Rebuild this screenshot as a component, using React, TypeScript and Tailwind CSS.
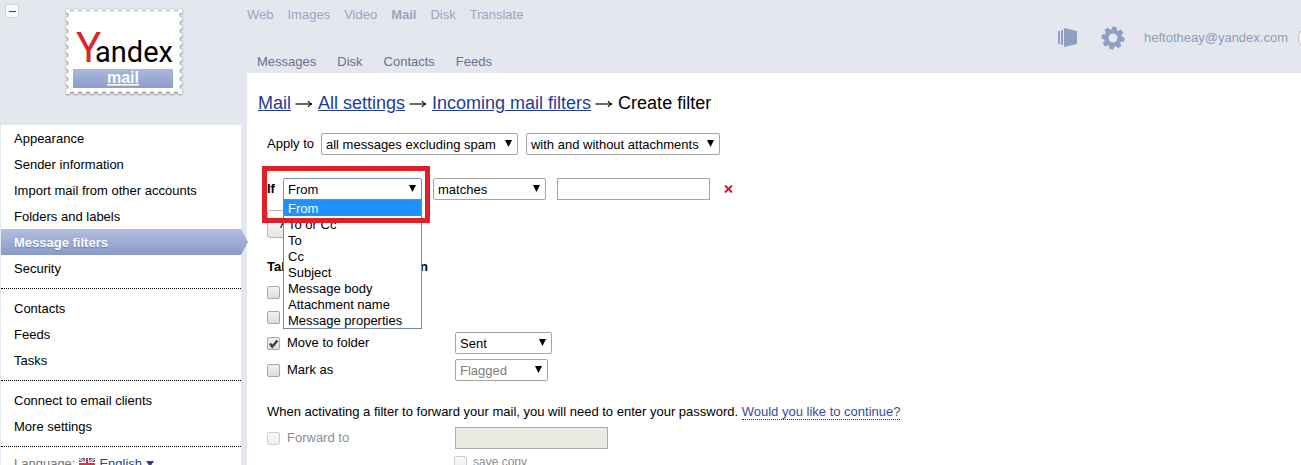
import { useState } from "react";
import type { ReactNode, SelectHTMLAttributes } from "react";
import clsx from "clsx";

const serviceLinks = ["Web", "Images", "Video", "Mail", "Disk", "Translate"];
const mailTabs = ["Messages", "Disk", "Contacts", "Feeds"];

const menuGroups = [
  [
    "Appearance",
    "Sender information",
    "Import mail from other accounts",
    "Folders and labels",
    "Message filters",
    "Security",
  ],
  ["Contacts", "Feeds", "Tasks"],
  ["Connect to email clients", "More settings"],
];

const conditionFields = [
  "From",
  "To or Cc",
  "To",
  "Cc",
  "Subject",
  "Message body",
  "Attachment name",
  "Message properties",
];

// Perforation holes along the stamp edges
const holesX = Array.from({ length: 14 }, (_, i) => 7 + i * 8);
const holesY = Array.from({ length: 10 }, (_, i) => 7 + i * 8);

function StampLogo() {
  return (
    <svg width="120" height="90" viewBox="0 0 120 90" role="img" aria-label="Yandex mail">
      <defs>
        <mask id="perforation" maskUnits="userSpaceOnUse" x="0" y="0" width="120" height="90">
          <rect x="1" y="1" width="116" height="85" fill="#fff" />
          {holesX.map((x) => (
            <g key={x}>
              <circle cx={x} cy="1" r="2.6" fill="#000" />
              <circle cx={x} cy="86" r="2.6" fill="#000" />
            </g>
          ))}
          {holesY.map((y) => (
            <g key={y}>
              <circle cx="1" cy={y} r="2.6" fill="#000" />
              <circle cx="117" cy={y} r="2.6" fill="#000" />
            </g>
          ))}
        </mask>
        <linearGradient id="band" x1="0" y1="0" x2="0" y2="1">
          <stop offset="0" stopColor="#abb8da" />
          <stop offset="1" stopColor="#8b9dcd" />
        </linearGradient>
        <filter id="stampShadow" filterUnits="userSpaceOnUse" x="0" y="0" width="120" height="90">
          <feDropShadow dx="0" dy="0.6" stdDeviation="0.8" floodColor="#55555a" floodOpacity="0.9" />
        </filter>
      </defs>
      <g filter="url(#stampShadow)">
        <rect x="1" y="1" width="116" height="85" fill="#fff" mask="url(#perforation)" />
      </g>
      <text x="11" y="54" fontFamily="Roboto, sans-serif">
        <tspan fontSize="42" fill="#d9252c">
          Y
        </tspan>
        <tspan x="30" fontSize="29" fill="#000">
          andex
        </tspan>
      </text>
      <rect x="8" y="61" width="100" height="19" fill="url(#band)" />
      <text
        x="58"
        y="75"
        textAnchor="middle"
        fontFamily="Liberation Sans, Arial, sans-serif"
        fontSize="16"
        fontWeight="bold"
        textDecoration="underline"
        fill="#fff"
      >
        mail
      </text>
    </svg>
  );
}

function FlagIcon() {
  return (
    <svg width="16" height="12" viewBox="0 0 16 12" aria-hidden="true">
      <rect width="16" height="12" fill="#4a5fa8" />
      <path d="M0 0L16 12M16 0L0 12" stroke="#fff" strokeWidth="2.4" />
      <path d="M0 0L16 12M16 0L0 12" stroke="#d9434a" strokeWidth="1" />
      <path d="M8 0V12M0 6H16" stroke="#fff" strokeWidth="4" />
      <path d="M8 0V12M0 6H16" stroke="#d9343c" strokeWidth="2" />
    </svg>
  );
}

function ThemesIcon() {
  return (
    <svg width="20" height="20" viewBox="0 0 20 20" fill="#8f9fc1" aria-hidden="true">
      <rect x="0" y="3" width="2" height="13" />
      <rect x="3" y="2" width="2" height="15" />
      <path d="M6 0L19 3V16L6 19Z" />
    </svg>
  );
}

function GearIcon() {
  const teeth = [0, 45, 90, 135, 180, 225, 270, 315];
  return (
    <svg width="24" height="24" viewBox="0 0 24 24" aria-hidden="true">
      <g fill="#8f9fc1">
        {teeth.map((angle) => (
          <path key={angle} d="M9 5L10 0.6H14L15 5Z" transform={`rotate(${angle + 8} 12 12)`} />
        ))}
      </g>
      <circle cx="12" cy="12" r="6.6" fill="none" stroke="#8f9fc1" strokeWidth="4.2" />
    </svg>
  );
}

interface SelectBoxProps extends SelectHTMLAttributes<HTMLSelectElement> {
  options: string[];
  width: string;
}

function SelectBox({ options, width, className, ...props }: SelectBoxProps) {
  return (
    <span className={clsx("relative inline-flex", width)}>
      <select
        {...props}
        className={clsx(
          "h-[22px] w-full appearance-none rounded-[2px] border bg-white pt-px pl-1 text-[13px] outline-none",
          className ?? "border-[#a5a5a5] text-black"
        )}
      >
        {options.map((option) => (
          <option key={option}>{option}</option>
        ))}
      </select>
      <svg
        className="pointer-events-none absolute top-[7px] right-[6px]"
        width="7"
        height="7"
        viewBox="0 0 7 7"
        aria-hidden="true"
      >
        <path d="M0 0H7L3.5 7Z" fill="#000" />
      </svg>
    </span>
  );
}

interface CheckBoxProps {
  label: string;
  defaultChecked?: boolean;
  disabled?: boolean;
  small?: boolean;
}

function CheckBox({ label, defaultChecked, disabled, small }: CheckBoxProps) {
  return (
    <label
      className={clsx(
        "flex items-center",
        small ? "gap-[6px] text-[12px]" : "gap-[7px] text-[13px]",
        disabled && "text-[#8c8c8c]"
      )}
    >
      <span className="relative flex">
        <input
          type="checkbox"
          defaultChecked={defaultChecked}
          disabled={disabled}
          className="peer size-[13px] appearance-none rounded-[2px] border border-[#a8a8a8] bg-linear-to-b from-[#f1f1f1] to-[#dedede] disabled:border-[#cfcfcf] disabled:from-[#f6f6f6] disabled:to-[#efefef]"
        />
        <svg
          className="pointer-events-none absolute top-0 left-0 hidden peer-checked:block"
          width="13"
          height="13"
          viewBox="0 0 13 13"
          aria-hidden="true"
        >
          <path d="M3 6.5L5.3 9.5L10.5 3.5" fill="none" stroke="#3c3c3c" strokeWidth="2.4" />
        </svg>
      </span>
      {label}
    </label>
  );
}

function Row({ label, children }: { label: ReactNode; children?: ReactNode }) {
  return (
    <div className="flex items-center">
      <div className="w-[188px] shrink-0">{label}</div>
      {children}
    </div>
  );
}

function Sidebar() {
  return (
    <aside className="flex w-[247px] shrink-0 flex-col">
      <div className="flex h-[125px] shrink-0 items-start pt-[5px] pl-[6px]">
        <button
          type="button"
          aria-label="Collapse"
          className="flex size-3 items-center justify-center bg-[#f8f9fb] ring-1 ring-[#cfd3da]"
        >
          <span className="h-px w-[7px] bg-[#444]" />
        </button>
        <a href="#mail" className="mt-[3px] ml-[47px]">
          <StampLogo />
        </a>
      </div>
      <nav className="mr-[6px] ml-px grow bg-white">
        {menuGroups.map((group) => (
          <ul key={group[0]} className="border-b border-dotted border-black pb-[7px] not-first:pt-[6px]">
            {group.map((item) => {
              const active = item === "Message filters";
              return (
                <li key={item} className={clsx("relative flex", active && "bg-linear-to-b from-[#b1bedf] to-[#8a9bca]")}>
                  <a
                    href="#settings"
                    className={clsx(
                      "grow pt-0.5 pl-[13px] leading-6",
                      active && "font-bold text-white text-shadow-[0_1px_1px_#6a7baa]"
                    )}
                  >
                    {item}
                  </a>
                  {active && (
                    <svg
                      className="absolute top-0 left-full"
                      width="7"
                      height="26"
                      viewBox="0 0 7 26"
                      aria-hidden="true"
                    >
                      <defs>
                        <linearGradient id="tip" x1="0" y1="0" x2="0" y2="1">
                          <stop offset="0" stopColor="#b1bedf" />
                          <stop offset="1" stopColor="#8a9bca" />
                        </linearGradient>
                      </defs>
                      <path d="M0 0L7 13L0 26Z" fill="url(#tip)" />
                    </svg>
                  )}
                </li>
              );
            })}
          </ul>
        ))}
        <div className="flex items-center gap-1 pt-1 pl-[13px] leading-[26px] text-[#777]">
          Language:
          <FlagIcon />
          <a href="#language" className="flex items-center gap-1 text-[#2a3f9d]">
            English
            <svg width="8" height="6" viewBox="0 0 8 6" aria-hidden="true">
              <path d="M0 0H8L4 6Z" fill="currentColor" />
            </svg>
          </a>
        </div>
      </nav>
    </aside>
  );
}

function Header() {
  return (
    <header className="flex h-[73px] shrink-0 justify-between">
      <div className="flex flex-col justify-between pt-1">
        <nav className="flex gap-[14px] leading-[22px] text-[#9aa6bf]">
          {serviceLinks.map((link) => (
            <a key={link} href="#service" className={clsx(link === "Mail" && "font-bold")}>
              {link}
            </a>
          ))}
        </nav>
        <nav className="flex gap-[21px] pl-[10px] leading-[22px] text-[#66728f]">
          {mailTabs.map((tab) => (
            <a key={tab} href="#tab">
              {tab}
            </a>
          ))}
        </nav>
      </div>
      <div className="flex items-center pt-[2px]">
        <button type="button" aria-label="Themes" className="mr-[23px]">
          <ThemesIcon />
        </button>
        <button type="button" aria-label="Settings" className="mr-[19px]">
          <GearIcon />
        </button>
        <a href="#account" className="mr-[10px] text-[#8f9cb9]">
          heftotheay@yandex.com
        </a>
        <span className="flex w-[3px] overflow-hidden">
          <span className="size-6 shrink-0 rounded-full border border-[#b9bdc6] bg-white" />
        </span>
      </div>
    </header>
  );
}

function FieldPicker() {
  const [field, setField] = useState("From");

  return (
    <div className="relative flex">
      <SelectBox
        aria-label="Condition field"
        options={conditionFields}
        width="w-[139px]"
        className="border-[#6f94c4] text-black"
        value={field}
        onChange={(event) => setField(event.target.value)}
      />
      <ul
        role="listbox"
        aria-label="Condition field"
        className="absolute top-[21px] left-0 z-10 w-full border border-[#7189a5] bg-white"
      >
        {conditionFields.map((name) => (
          <li
            key={name}
            role="option"
            aria-selected={name === field}
            onClick={() => setField(name)}
            className={clsx("pt-0.5 pl-1 leading-[14px]", name === field && "bg-[#1e90ff] text-white")}
          >
            {name}
          </li>
        ))}
      </ul>
      {/* highlight frame around the field and its first option */}
      <div className="pointer-events-none absolute -top-[12px] -left-[21px] z-20 h-[57px] w-[168px] border-5 border-[#df2029]" />
    </div>
  );
}

function Arrow() {
  return (
    <svg className="mt-[3px]" width="18" height="18" viewBox="0 0 18 18" aria-hidden="true">
      <path d="M0.5 9H16.5" stroke="#000" strokeWidth="1.2" />
      <path d="M13 6C13.8 7.7 15 8.6 17 9C15 9.4 13.8 10.3 13 12" fill="none" stroke="#000" strokeWidth="1.1" />
    </svg>
  );
}

function FilterForm() {
  return (
    <main className="grow bg-white pl-[11px]">
      <h1 className="flex gap-[5px] pt-[19px] text-[18px] leading-[22px]">
        {["Mail", "All settings", "Incoming mail filters"].map((crumb) => (
          <span key={crumb} className="flex gap-1">
            <a href="#crumb" className="text-[#1f3c98] underline">
              {crumb}
            </a>
            <Arrow />
          </span>
        ))}
        Create filter
      </h1>

      <form className="pl-[9px]">
        <div className="mt-[19px] flex items-center">
          <label htmlFor="scope" className="mr-[7px]">
            Apply to
          </label>
          <SelectBox id="scope" options={["all messages excluding spam"]} width="w-[197px] mr-[8px]" />
          <SelectBox aria-label="Attachments" options={["with and without attachments"]} width="w-[194px]" />
        </div>

        <div className="mt-[23px] flex items-center">
          <span className="w-4 font-bold">If</span>
          <FieldPicker />
          <SelectBox aria-label="Comparison" options={["matches"]} width="w-[113px] ml-[11px]" />
          <input
            type="text"
            aria-label="Value"
            className="ml-[11px] h-[22px] w-[153px] border border-[#a5a5a5] px-1"
          />
          <button type="button" aria-label="Remove condition" className="ml-[14px]">
            <svg width="9" height="8" viewBox="0 0 9 8" aria-hidden="true">
              <path d="M1 0.5L8 7.5M8 0.5L1 7.5" stroke="#c8102e" strokeWidth="1.8" />
            </svg>
          </button>
        </div>

        <button
          type="button"
          className="mt-[10px] block h-7 rounded-[3px] border border-[#b5b5b5] bg-linear-to-b from-white to-[#e6e6e6] px-3"
        >
          Add condition
        </button>

        <h2 className="mt-[19px] font-bold leading-5">Take the necessary action</h2>
        <div className="mt-[6px] flex flex-col gap-[5px]">
          <CheckBox label="Delete" />
          <CheckBox label="Mark as read" />
        </div>
        <div className="mt-[5px] flex flex-col gap-[5px]">
          <Row label={<CheckBox label="Move to folder" defaultChecked />}>
            <SelectBox aria-label="Folder" options={["Sent"]} width="w-[97px]" />
          </Row>
          <Row label={<CheckBox label="Mark as" />}>
            <SelectBox
              aria-label="Label"
              options={["Flagged"]}
              width="w-[93px]"
              className="border-[#a5a5a5] text-[#808080]"
            />
          </Row>
        </div>

        <p className="mt-[21px] leading-5">
          When activating a filter to forward your mail, you will need to enter your password.{" "}
          <a href="#continue" className="border-b border-dotted border-[#1f2f80] text-[#3a4a9c]">
            Would you like to continue?
          </a>
        </p>
        <div className="mt-[5px]">
          <Row label={<CheckBox label="Forward to" disabled />}>
            <input
              type="text"
              aria-label="Forwarding address"
              disabled
              className="h-[22px] w-[153px] border border-[#adadad] bg-[#ebebe4]"
            />
          </Row>
        </div>
        <div className="mt-[4px] pl-[187px]">
          <CheckBox label="save copy" disabled small />
        </div>
      </form>
    </main>
  );
}

export default function App() {
  return (
    <div className="flex h-screen overflow-hidden bg-[#e4e7ee] font-['Liberation_Sans',Arial,sans-serif] text-[13px] text-black">
      <Sidebar />
      <div className="flex grow flex-col">
        <Header />
        <FilterForm />
      </div>
    </div>
  );
}
